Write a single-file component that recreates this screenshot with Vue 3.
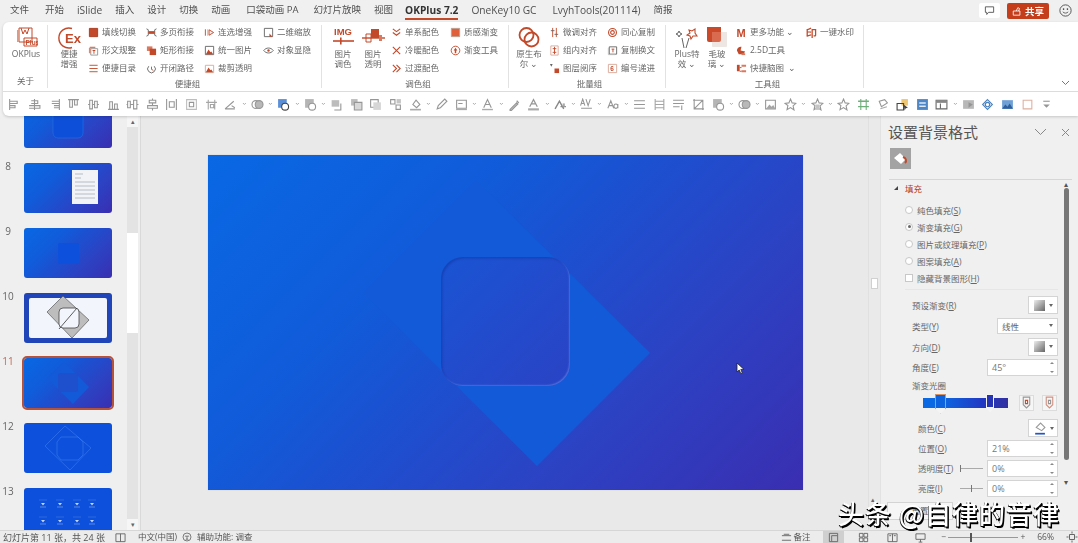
<script setup>
import { h } from 'vue'

const RED = '#c2492a', G = '#969696', D = '#666'
const s = (d, c = G, w = 1) => ['path', { d, fill: 'none', stroke: c, 'stroke-width': w }]
const f = (d, c = RED) => ['path', { d, fill: c }]
const t = (x, y, size, str, c = RED, weight = 700) => ['text', { x, y, 'font-size': size, fill: c, 'font-weight': weight, 'font-family': 'Liberation Sans, sans-serif' }, str]
const c = (cx, cy, r, col = RED, w = 1.5, fill = 'none') => ['circle', { cx, cy, r, stroke: col, 'stroke-width': w, fill }]

const I = {
  // ribbon small
  rFill: [f('M1.5 1.5h9v9h-9z'), s('M1.5 1.5h9v9h-9z', '#a8391d')],
  rText: [s('M2 2.5h6', RED), s('M3 4h7.5v7H3z', G), f('M5 5.5h3v1H7v3H6v-3H5z'), f('M1 3h2v6H1z', '#d98a75')],
  rToc: [s('M1.5 2.5h9M1.5 6h9M1.5 9.5h9', RED)],
  rPage: [s('M.5 2l2 1v6l-2 1M11.5 2l-2 1v6l2 1', D), f('M2.5 4.5h7v3h-7z')],
  rRect: [f('M1 1.5h6v5H1z', '#d97a60'), f('M4 4h7v7H4z')],
  rPath: [s('M3 3.5a4.2 4.2 0 1 0 6 0', D), s('M6 4v3l2 1', RED)],
  rSel: [s('M1.5 2.5v7', RED), s('M4 2.5v7', '#bbb'), f('M5.5 3l5 3-5 3z', '#eee'), s('M5.5 3l5 3-5 3z', RED)],
  rPic: [s('M1.5 1.5h9v9h-9z', D), f('M2 10l3-5 2 3 1-1 2 3z')],
  rCrop: [s('M1.5 2.5h9v8h-9z', '#d9a899'), f('M2 10l3-5 2 3 1-1 2 3z')],
  rZoom: [s('M1.5 1.5h9v9h-9z', D), f('M7 7l3.5 3.5H7z')],
  rEye: [s('M.8 6c2.5-3.6 7.9-3.6 10.4 0-2.5 3.6-7.9 3.6-10.4 0z', D), f('M4.7 6a1.3 1.3 0 1 0 2.6 0 1.3 1.3 0 0 0-2.6 0z')],
  rV1: [s('M2 2l4 3 4-3M2 6l4 3 4-3', RED, 1.2)],
  rV2: [s('M2 2l8 8M10 2L2 10', RED, 1.2)],
  rV3: [s('M2 2l4 4-4 4M6 2l4 4-4 4', RED, 1.2)],
  rTex: [f('M1.5 1.5h9v9h-9z', '#e0603c'), s('M1.5 1.5h9v9h-9z', '#b8a090')],
  rGrad: [c(6, 6, 4.7, RED, 1), f('M6 3l2 3H6.8v3H5.2V6H4z')],
  rAl1: [s('M4 1v10M8 1v10', RED), s('M2 4h4M6 8h4', D)],
  rAl2: [s('M2 1h8v10H2z', '#d9a899'), s('M6 2v8M4 4h4M4 8h4', RED)],
  rLay: [f('M1 1l3 0-1.5 3z', D), f('M6 6h5v5H6z')],
  rRing: [c(6, 6, 4.3, RED, 1.2), c(6, 6, 2, RED, 1.2)],
  rCopy: [s('M2.5 2h8v8h-8z', D), s('M1.5 3v7.5H9', '#bbb'), s('M5 4.5h3M6.5 4.5V8', RED)],
  rNum: [s('M1.5 1.5h9v9h-9z', '#d9a899'), t(3.6, 9, 7, '6')],
  rM: [t(.5, 10.5, 12, 'M')],
  r25: [f('M1 6c0-3 3-4.5 5-4l-1 4 5 1-2 3H3z'), f('M6 9h4v2H6z', '#d97a60')],
  rMind: [f('M1 2h3v7H1z'), f('M6 2h5v2H6zM6 8h5v2H6z', '#d97a60'), s('M4 5h2M4 9h2', RED)],
  rMark: [t(.5, 10.5, 12, '印', RED)],
  // ribbon big
  bOk: [s('M5 3h13v14H5z', RED), s('M7 3l2 6 2-4 2 4 2-6', RED), f('M3 5h2v12H3z', '#dd9a85'), s('M10 13h13v8H10z', RED), t(11.5, 19.5, 6.5, 'Plus')],
  bEx: [s('M15 3.5a10 10 0 1 0 0 19', RED, 1.4), t(8, 18, 13, 'Ex')],
  bImg: [t(3, 9.5, 9.5, 'IMG'), s('M2 16h21', RED, 1.6), f('M9 12.5h1.6v7H9z')],
  bTrans: [s('M1 13h23', RED, 1.4), f('M10 4h8v9h-8z'), s('M5 9h5v8H5z', RED), f('M18 10h3v6h-3z', '#d97a60')],
  bBool: [c(9.5, 10, 7, RED, 1.8), c(14.5, 14.5, 7, RED, 1.8)],
  bPlus: [s('M14 5l3 1 3-2 0 4 2 3-4 0-2 3-1-3-3-1 3-2z', RED, 1.1), s('M4 6l1 2 2 1-2 1-1 2-1-2-2-1 2-1z', D), s('M14 13l-3 10M7 13l2 10', D)],
  bGlass: [f('M2 2h14v13a2 2 0 0 1-2 2H4a2 2 0 0 1-2-2z', '#c9492a'), f('M7 7h15v14a1 1 0 0 1-1 1H8a1 1 0 0 1-1-1z', '#eee6e2'), f('M7 7h9v8a2 2 0 0 1-2 2H7z', '#d96c50')],
  // QAT
  al: [s('M1.500 1v10M1.500 3h7v2h-7M1.500 7h5v2h-5')],
  ac: [s('M6 1v10M3 2.500h6v2.500H3M1 7h10v2.500H1')],
  ar: [s('M10.500 1v10M3.500 3h7v2h-7M5.500 7h5v2h-5')],
  at: [s('M1 1.500h10M2.500 1.500v7h2.500v-7M7 1.500v5h2.500v-5')],
  am: [s('M1 6h1.500M5 6h2M9.500 6H11M2.500 2H5v8H2.500zM7 3h2.500v6H7z')],
  ab: [s('M1 10.500h10M2.500 10.500v-7H5v7M7 10.500v-5h2.500v5')],
  dh: [s('M.5 6h1M1.500 3h2.500v6H1.500zM4 6h3M7 2h3v8H7zM10 6h1.500')],
  dv: [s('M6 .5V2M3 2h6v2.500H3zM6 4.500V7M1.500 7h9v2.500h-9zM6 9.500v2')],
  wh: [s('M1.500 1v10M10.500 1v10M4 3.500h4.500v5H4z')],
  hh: [s('M3 1.500v9M9 1.500v9M1 4h10M5 6h3v3H5z', '#a5a5a5')],
  sz: [s('M1.500 1.500h9v9h-9z', '#bdbdbd'), s('M4 4h4v4H4z', G)],
  rot: [s('M1 10l8-7M1 10h9M7 7l3 2', G)],
  merge: [c(4.5, 6, 3.6, G, 1), c(7.5, 6, 3.6, G, 1, '#b8b8b8')],
  fillB: [f('M1 1h8v8H1z', '#5a8fd8'), c(7.5, 8, 3.2, '#444', 1, '#fff')],
  fillG: [f('M1 1h8v8H1z', '#b5b5b5'), c(7.5, 8, 3.2, G, 1, '#fff')],
  l1: [f('M1.5 2h7v6h-7z', '#bcbcbc'), s('M10 5v6H4', G)],
  l2: [f('M1 1h6v6H1z', '#bcbcbc'), f('M4 4h7v7H4z', '#d8d8d8'), s('M4 4h7v7H4z', G)],
  l3: [s('M1.5 1.5h7v7h-7z', G), f('M4 4h7v7H4z', '#d6d6d6')],
  l4: [s('M1.5 1.5h4v4h-4zM6.5 6.5h4v4h-4z', G), f('M7 1h4v4H7z', '#c5c5c5')],
  bucket: [s('M3.5 6l3-4 3.5 4-3 3z', G), f('M1 10h10v1.5H1z', '#aaa')],
  pen: [s('M2 10l1-3 6-6 2 2-6 6z', G)],
  card: [s('M1.5 2h9v7.5h-9zM3 5h4', G), f('M1 10h10v1.2H1z', '#aaa')],
  A: [s('M2.5 9L6 1.5 9.5 9M4 6h4', G), f('M1 10h10v1.3H1z', '#aaa')],
  dropper: [s('M2 10.5l6-6 1 1-6 6H2zM8 2.5l2 2', G, 1.2)],
  Ag: [s('M2.5 8L6 1.5 9.5 8M4 5.5h4', G, 1.1), f('M1 9.5h10v2H1z', '#aaa')],
  dk: [s('M1 10L5 3l4 7M6 8h5', '#888', 1.3), f('M8 5h2v3H8z', '#aaa')],
  av: [s('M.5 7L2.5 1l2 6M1 5h3M5.5 1l2 6 2-6M1 9.500h10', G)],
  Aa: [s('M.8 9.5L3.5 2.5l2.7 7M1.8 7h3.400M10 5.500v4M10 7.500a1.800 2 0 1 0 0 .1', G)],
  lines: [s('M1 2.5h10M1 6h10M1 9.5h10', G)],
  lines2: [s('M2 1v10M10 1v10M2 3h8M2 6h8M2 9h8', '#a5a5a5')],
  lines3: [s('M1 2h10M1 5h10M1 8h6M9 7v4', G)],
  crop: [s('M2 1v9h9M1 2h9v9M2 10l8-8', G)],
  pic: [s('M1.5 2h9v8h-9z', G), f('M2 10l3-4 2 2 1.5-1.5 2 3.5z', '#a5a5a5')],
  star: [s('M6 1l1.5 3.5 3.5.4-2.6 2.4.8 3.7L6 8.8l-3.2 1.9.8-3.7L1 4.9l3.5-.4z', G)],
  star2: [s('M6 1l1.5 3.5 3.5.4-2.6 2.4.8 3.7L6 8.8l-3.2 1.9.8-3.7L1 4.9l3.5-.4z', G), f('M4 6h4v5H4z', '#c4c4c4')],
  green: [s('M1 3h10M1 8h10', '#6fae7a', 1.2), s('M3.5 1v10M8.5 1v10', '#6fae7a')],
  tilt: [s('M3 3l5-1.5 2.5 3L5 8z', G), s('M4 10l6-2', '#aaa')],
  sel: [f('M5 1h6v6H5z', '#edc676'), s('M1 5h6v6H1z', '#444'), f('M7 6l4 3-2 .5-1 2z', '#444')],
  blue: [f('M1 1h10v10H1z', '#4f86c6'), f('M3 4h6v1.2H3zM3 7h6v1.2H3z', '#dfeaf6')],
  win: [s('M1 2h10v8H1z', '#666'), f('M1 2h10v2.5H1z', '#888'), s('M5 5v5', '#666')],
  gfx: [f('M1 2h10v8H1z', '#b8b8b8'), f('M6 4l4 2-4 3z', '#959595')],
  diam: [s('M6 1.5L10.5 6 6 10.5 1.5 6zM3.5 6h5', '#4a82bf'), c(6, 6, 2, '#4a82bf', 1, '#fff')],
  land: [f('M1 2h10v8H1z', '#6fa1d6'), f('M1 10l3-4 2 2 2-3 3 5z', '#2f5f9c')],
  oBox: [s('M2 2h8v8H2z', '#e0b0a0')],
  more: [s('M3 3h6', G), f('M3 6h6L6 9z', G)],
  // pane / status
  reset1: [s('M3 1h6v7L6 11 3 8z', G), s('M5 4h2v3H5z', RED)],
  reset2: [s('M3 1h6v7L6 11 3 8z', '#d09080'), s('M5 4h2v3H5z', G)],
  paint: [f('M3 5l4-4 4 4-3 3z', '#fff'), s('M3 5l4-4 4 4-3 3z', '#999'), f('M2 10h9v1.6H2z', '#2255c8')],
  note: [s('M1 4h10M3 2.5h6M1 9h10', D)],
  vNormal: [s('M1.5 1.5h9v9h-9zM4 4v6', D), s('M4 4h6', D)],
  vSort: [s('M1.5 1.5h4v4h-4zM6.5 1.5h4v4h-4zM1.5 6.5h4v4h-4zM6.5 6.5h4v4h-4z', D)],
  vRead: [s('M1 2h10v8.5H1zM6 2v8.5M2.5 4h2M7.5 4h2', D)],
  vShow: [s('M1 2h10v6H1zM6 8v3M4 11h4', D)],
  fit: [s('M6 .5v2M6 9.5v2M.5 6h2M9.5 6h2M3.5 3.5h5v5h-5z', D)],
  book: [s('M1 2h10v8.5H1zM6 2v8.5', D)],
  access: [c(6, 6, 4.8, D, 1), s('M3.5 5h5M6 5v2.5M4.5 10L6 7.5 7.5 10', D)],
  comment: [s('M1.5 2h9v6H5L3 10.3V8H1.5z', '#555')],
  shareI: [s('M1.5 6h8v5h-8zM5 6l2-4 2 1-1 3', '#fff')],
  smile: [c(6, 6, 5.2, '#555', .9), s('M3.5 7.2c1 1.6 4 1.6 5 0', '#555', .8), f('M3.6 4h1.2v1.6H3.6zM7.2 4h1.2v1.6H7.2z', '#555')]
}

const Ic = (props) => {
  const vb = props.vb || 12
  return h('svg', { viewBox: `0 0 ${vb} ${vb}`, width: props.size || 12, height: props.size || 12, style: 'display:block;flex:none' },
    (I[props.n] || []).map(([tag, attrs, txt]) => h(tag, attrs, txt)))
}
Ic.props = ['n', 'size', 'vb']

const tabs = ['文件', '开始', 'iSlide', '插入', '设计', '切换', '动画', '口袋动画 PA', '幻灯片放映', '视图', 'OKPlus 7.2', 'OneKey10 GC', 'LvyhTools(201114)', '简报']
const isLatin = (x) => /^[A-Za-z]/.test(x)

const groups = [
  { id: 'g1', label: '关于', items: [{ big: ['OKPlus'], n: 'bOk', cls: 'wide' }] },
  { id: 'g2', label: '便捷组', items: [
    { big: ['便捷', '增强'], n: 'bEx' },
    { col: [['rFill', '填线切换'], ['rText', '形文规整'], ['rToc', '便捷目录']], w: 'w58' },
    { col: [['rPage', '多页衔接'], ['rRect', '矩形衔接'], ['rPath', '开闭路径']], w: 'w58' },
    { col: [['rSel', '连选增强'], ['rPic', '统一图片'], ['rCrop', '裁剪透明']], w: 'w59' },
    { col: [['rZoom', '二维缩放'], ['rEye', '对象显隐']], w: 'w58' }
  ] },
  { id: 'g3', label: '调色组', items: [
    { big: ['图片', '调色'], n: 'bImg' },
    { big: ['图片', '透明'], n: 'bTrans' },
    { col: [['rV1', '单系配色'], ['rV2', '冷暖配色'], ['rV3', '过渡配色']], w: 'w59' },
    { col: [['rTex', '质感渐变'], ['rGrad', '渐变工具']], w: 'w58' }
  ] },
  { id: 'g4', label: '批量组', items: [
    { big: ['原生布', '尔 ⌄'], n: 'bBool' },
    { col: [['rAl1', '微调对齐'], ['rAl2', '组内对齐'], ['rLay', '图层阅序']], w: 'w58' },
    { col: [['rRing', '同心复制'], ['rCopy', '复制换文'], ['rNum', '编号递进']], w: 'w58' }
  ] },
  { id: 'g5', label: '工具组', items: [
    { big: ['Plus特', '效 ⌄'], n: 'bPlus' },
    { big: ['毛玻', '璃 ⌄'], n: 'bGlass' },
    { col: [['rM', '更多功能 ⌄'], ['r25', '2.5D工具'], ['rMind', '快捷脑图  ⌄']], w: 'w70' },
    { col: [['rMark', '一键水印']], w: 'w58' }
  ] }
]

const qat = ['al', 'ac', 'ar', 'at', 'am', 'ab', 'dh', 'dv', 'wh', 'sz', 'hh', 'rot*', 'merge*', 'fillB*', 'fillG*', 'l1', 'l2', 'l3', 'l4', 'bucket*', 'pen', 'card*', 'A*', 'dropper', 'Ag*', 'dk*', 'av*', 'Aa*', 'lines', 'lines2', 'lines3', 'crop', 'fillG*', 'merge*', 'pic', 'star*', 'star2*', 'star', 'green', 'tilt', 'sel', 'blue', 'win*', 'gfx', 'diam', 'land', 'oBox', 'more']
  .map((k) => ({ k: k.replace('*', ''), ch: k.endsWith('*') }))

const slides = [7, 8, 9, 10, 11, 12, 13]
const marks = [19, 36, 53, 68, 19, 36, 53, 68]

const radios = [
  { text: '纯色填充', key: 'S' }, { text: '渐变填充', key: 'G', on: true },
  { text: '图片或纹理填充', key: 'P' }, { text: '图案填充', key: 'A' }
]
</script>

<template>
  <div class="app">
    <header class="topbar">
      <nav class="tabs">
        <span v-for="tb in tabs" :key="tb" class="tab" :class="{ active: tb.startsWith('OKPlus'), latin: isLatin(tb) }">{{ tb }}</span>
      </nav>
      <div class="top-right">
        <button class="cmt"><Ic n="comment" :size="11" /></button>
        <button class="share"><Ic n="shareI" :size="10" /><b>共享</b></button>
        <span class="smile"><Ic n="smile" :size="13" /></span>
      </div>
    </header>

    <section class="ribbon">
      <div class="groups">
        <div v-for="g in groups" :key="g.id" class="group" :class="g.id">
          <div class="group-body">
            <template v-for="(it, i) in g.items" :key="i">
              <div v-if="it.big" class="big" :class="it.cls">
                <span class="big-ic"><Ic :n="it.n" :size="24" :vb="24" /></span>
                <span v-for="l in it.big" :key="l" class="big-t">{{ l }}</span>
              </div>
              <div v-else class="col" :class="it.w">
                <div v-for="r in it.col" :key="r[1]" class="item"><Ic :n="r[0]" :size="11" /><span>{{ r[1] }}</span></div>
              </div>
            </template>
          </div>
          <div class="glabel">{{ g.label }}</div>
        </div>
        <div class="collapse"><svg width="9" height="6" viewBox="0 0 9 6"><path d="M1 1l3.5 3.5L8 1" fill="none" stroke="#777" /></svg></div>
      </div>
      <div class="qat">
        <template v-for="(q, i) in qat" :key="i">
          <span class="q"><Ic :n="q.k" :size="13" /></span>
          <svg v-if="q.ch" class="qch" width="7" height="4" viewBox="0 0 7 4"><path d="M2 1l1.500 1.500L5 1" fill="none" stroke="#aaa" /></svg>
        </template>
      </div>
    </section>

    <main class="main">
      <aside class="thumbs">
        <div class="list">
          <div v-for="n in slides" :key="n" class="row" :class="{ cur: n === 11 }">
            <span class="num">{{ n === 7 ? '' : n }}</span>
            <div class="thumb" :class="'t' + n">
              <svg viewBox="0 0 88 50" width="88" height="50">
                <rect v-if="n === 7" x="29" y="10" width="30" height="30" rx="5" fill="#0d4fd8" stroke="#2f78e8" stroke-width=".5" />
                <template v-if="n === 8">
                  <rect x="48" y="7" width="26" height="34" fill="#f1f3f6" />
                  <path d="M51 11h8M51 15h6M51 19h20M51 23h20M51 27h20M51 31h20M51 35h20" stroke="#8f98a8" stroke-width=".6" />
                </template>
                <rect v-if="n === 9" x="34" y="15" width="21" height="21" rx="2" fill="#0c50dc" />
                <template v-if="n === 10">
                  <rect x="5" y="5" width="78" height="40" rx="2" fill="#f2f6fc" />
                  <path d="M39 3L65 27 48 45 23 19z" fill="#bdbdbd" stroke="#444" stroke-width=".6" />
                  <rect x="35" y="15" width="20" height="20" rx="4" fill="#f2f6fc" stroke="#444" stroke-width=".8" />
                  <path d="M35 36L53 15" stroke="#333" stroke-width=".8" />
                </template>
                <template v-if="n === 11">
                  <path d="M40 4L65 29 49 46 23 20z" fill="#125ad7" />
                  <rect x="34" y="15" width="20" height="19" rx="3" fill="#1e4fcd" />
                </template>
                <template v-if="n === 12">
                  <path d="M41 3L67 25 46 47 21 23z" fill="none" stroke="#3d7cf0" stroke-width=".6" />
                  <path d="M37 14h17l5 5v13l-5 5H37l-4-5V19z" fill="none" stroke="#3d7cf0" stroke-width=".6" />
                </template>
                <template v-if="n === 13">
                  <g v-for="(x, i) in marks" :key="i">
                    <path :d="`M${x - 2} ${i < 4 ? 15 : 32}h4l-2 2.500z`" fill="#c4d6f6" />
                    <path :d="`M${x - 4} ${i < 4 ? 12 : 29}h8`" stroke="#4d80e8" stroke-width=".5" />
                    <path :d="`M${x - 3} ${i < 4 ? 19 : 36}h6`" stroke="#8fb0f0" stroke-width=".6" />
                  </g>
                </template>
              </svg>
            </div>
          </div>
        </div>
        <div class="vbar">
          <span class="arr">▴</span>
          <div class="vtrack"><div class="vthumb"></div></div>
          <span class="arr">▾</span>
        </div>
      </aside>

      <div class="canvas">
        <div class="slide">
          <svg class="diamond" viewBox="0 0 595 335" width="595" height="335">
            <path d="M268 25L442 198 329 311 155 138z" fill="#125ad7" />
          </svg>
          <div class="rrect"></div>
        </div>
        <svg class="cursor" width="9" height="13" viewBox="0 0 9 13"><path d="M1 1v9l2.200-2 1.600 3.600 1.500-.7L4.800 7.400H8z" fill="#fff" stroke="#222" stroke-width=".8" /></svg>
        <div class="cbar">
          <div class="cthumb"></div>
          <span class="cup">▴</span>
        </div>
      </div>

      <aside class="pane">
        <div class="p-head">
          <span class="p-title">设置背景格式</span>
          <span class="p-btns">
            <svg width="13" height="8" viewBox="0 0 13 8"><path d="M1 1l5.500 5.500L12 1" fill="none" stroke="#888" /></svg>
            <svg width="9" height="9" viewBox="0 0 9 9"><path d="M1 1l7 7M8 1L1 8" stroke="#888" /></svg>
          </span>
        </div>
        <div class="p-tab">
          <svg width="15" height="15" viewBox="0 0 15 15"><path d="M1 7l6-5 6 6-5 5z" fill="#fff" /><path d="M10 6c3 1 4 4 2 6" fill="none" stroke="#c2492a" stroke-width="2" /></svg>
        </div>
        <div class="p-line"></div>
        <div class="p-body">
          <div class="form">
            <div class="sect"><i class="tri"></i><span>填充</span></div>
            <div class="opts">
              <label v-for="r in radios" :key="r.key" class="opt">
                <i class="radio" :class="{ on: r.on }"></i>
                <span>{{ r.text }}(<u>{{ r.key }}</u>)</span>
              </label>
              <label class="opt"><i class="check"></i><span>隐藏背景图形(<u>H</u>)</span></label>
            </div>
            <div class="sep"></div>
            <div class="fr"><span>预设渐变(<u>R</u>)</span><div class="btn"><i class="gsw"></i><i class="dd"></i></div></div>
            <div class="fr"><span>类型(<u>Y</u>)</span><div class="sel"><span>线性</span><i class="dd"></i></div></div>
            <div class="fr"><span>方向(<u>D</u>)</span><div class="btn"><i class="gsw"></i><i class="dd"></i></div></div>
            <div class="fr"><span>角度(<u>E</u>)</span><div class="inp"><span>45°</span><em class="spin"></em></div></div>
            <div class="fr low"><span>渐变光圈</span></div>
            <div class="stops">
              <div class="gbar">
                <i class="stop s1"></i><i class="stop s2"></i>
              </div>
              <span class="sbtn"><Ic n="reset1" :size="13" /></span>
              <span class="sbtn"><Ic n="reset2" :size="13" /></span>
            </div>
            <div class="fr in"><span>颜色(<u>C</u>)</span><div class="btn"><Ic n="paint" :size="13" /><i class="dd"></i></div></div>
            <div class="fr in"><span>位置(<u>O</u>)</span><div class="inp"><span>21%</span><em class="spin"></em></div></div>
            <div class="fr in"><span>透明度(<u>T</u>)</span><i class="slid sl"></i><div class="inp"><span>0%</span><em class="spin"></em></div></div>
            <div class="fr in"><span>亮度(<u>I</u>)</span><i class="slid sm"></i><div class="inp"><span>0%</span><em class="spin"></em></div></div>
            <div class="reset">重置</div>
          </div>
          <div class="pbar">
            <span class="parr">▴</span>
            <div class="pthumb"></div>
            <span class="parr">▾</span>
          </div>
        </div>
      </aside>
    </main>

    <footer class="status">
      <div class="st-left">
        <span class="st-a">幻灯片第 11 张，共 24 张</span>
        <Ic n="book" :size="11" />
        <span>中文(中国)</span>
        <Ic n="access" :size="10" />
        <span>辅助功能: 调查</span>
      </div>
      <div class="st-right">
        <span class="st-note"><Ic n="note" :size="11" />备注</span>
        <span class="vw on"><Ic n="vNormal" :size="11" /></span>
        <span class="vw"><Ic n="vSort" :size="11" /></span>
        <span class="vw"><Ic n="vRead" :size="11" /></span>
        <span class="vw"><Ic n="vShow" :size="11" /></span>
        <div class="zoomer"><span>−</span><div class="ztrack"><i></i></div><span>+</span></div>
        <span class="pct">66%</span>
        <Ic n="fit" :size="12" />
      </div>
    </footer>

    <div class="watermark">头条 @自律的音律</div>
  </div>
</template>

<style>
html, body { margin: 0; padding: 0; background: #f0f0f0; overflow: hidden; }
</style>

<style scoped>
.app { position: relative; width: 1078px; height: 543px; overflow: hidden; background: #f0f0f0; display: flex; flex-direction: column; font-family: "Open Sans", "Noto Sans CJK SC", sans-serif; font-size: 8.5px; color: #666; }
.app > *:not(.watermark) { filter: blur(.3px); }
button { border: 0; padding: 0; font: inherit; }

.topbar { height: 22px; flex: none; display: flex; justify-content: space-between; }
.tabs { display: flex; align-items: flex-start; gap: 13px; padding-left: 10px; font-size: 9.500px; line-height: 20px; color: #4f4f4f; }
.tab { white-space: pre; }
.tab.latin { font-size: 10.200px; }
.tab:nth-child(1), .tab:nth-child(7), .tab:nth-child(12) { margin-right: 3px; }
.tab:nth-child(8) { margin-right: 2px; }
.tab.active { font-weight: 700; color: #333; border-bottom: 2px solid #c2492a; height: 18px; margin-left: -1px; }
.top-right { display: flex; align-items: center; gap: 7px; padding-right: 3px; height: 21px; }
.cmt { width: 21px; height: 15px; background: #fff; border-radius: 2px; display: flex; align-items: center; justify-content: center; }
.share { width: 42px; height: 16px; background: #c43e1c; border-radius: 2px; color: #fff; display: flex; align-items: center; justify-content: center; gap: 3px; font-size: 9.500px; }
.smile { margin-left: -1px; width: 20px; display: flex; justify-content: center; }

.ribbon { flex: none; margin-left: 3px; height: 94px; background: #fff; border-radius: 6px 0 0 6px; box-shadow: 0 1px 3px rgba(0,0,0,.18); position: relative; z-index: 2; }
.groups { height: 69px; display: flex; border-bottom: 1px solid #dcdcdc; position: relative; }
.group { height: 63px; border-right: 1px solid #e2e2e2; display: flex; flex-direction: column; flex: none; box-sizing: border-box; margin-top: 3px; }
.g1 { width: 45px; padding-left: 1px; }
.g2 { width: 274px; padding-left: 6px; }
.g3 { width: 187px; padding-left: 6px; }
.g4 { width: 157px; padding-left: 5px; }
.g5 { width: 198px; padding-left: 6px; }
.group-body { flex: 1; display: flex; align-items: flex-start; margin-top: -3px; }
.glabel { height: 14px; line-height: 13px; text-align: center; font-size: 8.5px; color: #666; }
.big { width: 30px; flex: none; display: flex; flex-direction: column; align-items: center; font-size: 8.5px; line-height: 10px; color: #666; }
.big.wide { width: 44px; }
.big-ic { height: 27px; display: flex; align-items: flex-end; }
.big-t { white-space: pre; }
.g2 .big { margin-right: 4px; }
.g3 .big:nth-child(2) { margin-right: 3px; }
.g4 .big { margin-right: 5px; }
.g5 .big:nth-child(2) { margin-right: 4px; }
.col { flex: none; display: flex; flex-direction: column; padding-top: 1px; }
.w58 { width: 58px; }
.w59 { width: 59px; }
.w70 { width: 70px; }
.item { height: 18px; display: flex; align-items: center; gap: 3px; white-space: pre; line-height: 1; }
.collapse { position: absolute; right: 8px; bottom: 5px; line-height: 0; }

.qat { height: 24px; display: flex; align-items: center; padding-left: 2px; }
.q { width: 19.650px; display: flex; justify-content: center; flex: none; }
.qch { flex: none; width: 6.800px; }

.main { flex: 1; min-height: 0; display: flex; }
.thumbs { width: 141px; flex: none; display: flex; background: #efefef; border-right: 1px solid #d9d9d9; box-sizing: border-box; overflow: hidden; }
.list { width: 127px; flex: none; margin-top: -18px; display: flex; flex-direction: column; gap: 15px; }
.row { height: 50px; display: flex; flex: none; position: relative; }
.num { width: 24px; box-sizing: border-box; font-size: 10px; line-height: 10px; color: #666; text-align: center; padding: 0 8px 0 0; margin-top: -2px; }
.row.cur .num { color: #c2694f; }
.thumb { width: 88px; height: 50px; border-radius: 3px; overflow: hidden; background: linear-gradient(135deg, #0968e4 0%, #115bd9 33%, #1d4fcf 50%, #2b43c4 70%, #3a2eb1 100%); }
.row.cur .thumb { outline: 2px solid #b5523c; outline-offset: 0; }
.t10 { background: #1f45b8; }
.t12, .t13 { background: #0c50dc; }
.thumb svg { display: block; }
.vbar { width: 11px; flex: none; background: #e3e3e3; display: flex; flex-direction: column; align-items: center; height: 414px; }
.arr { height: 11px; width: 11px; background: #f6f6f6; color: #666; font-size: 7px; line-height: 11px; text-align: center; flex: none; }
.vtrack { flex: 1; width: 100%; padding-top: 106px; box-sizing: border-box; }
.vthumb { height: 100px; background: #fff; }

.canvas { flex: 1; position: relative; background: #e9e9e9; padding: 39px 0 0 67px; box-sizing: border-box; min-width: 0; }
.slide { position: relative; width: 595px; height: 335px; background: linear-gradient(135deg, #0968e4 0%, #115bd9 33%, #1d4fcf 50%, #2b43c4 70%, #3a2eb1 100%); overflow: hidden; box-shadow: 0 0 1px rgba(0,0,0,.2); }
.diamond { position: absolute; left: 0; top: 0; }
.rrect { position: absolute; left: 233px; top: 102px; width: 129px; height: 129px; border-radius: 22px; background: linear-gradient(135deg, #1a54d3, #2a43c5); box-shadow: inset 1.500px 1.500px 2px rgba(12,44,150,.4), inset -1px -1px 1.500px rgba(120,150,245,.5); }
.cursor { position: absolute; left: 595px; top: 246px; }
.cbar { position: absolute; right: 0; top: 0; bottom: 0; width: 12px; background: #eaeaea; border-left: 1px solid #e0e0e0; box-sizing: border-box; }
.cthumb { position: absolute; left: 2px; top: 162px; width: 7px; height: 11px; background: #fff; border: 1px solid #d0d0d0; box-sizing: border-box; }
.cup { position: absolute; left: 2px; bottom: 26px; font-size: 7px; color: #666; line-height: 8px; }

.pane { width: 198px; flex: none; background: #f0f0f0; box-sizing: border-box; padding: 4px 0 0 7px; border-left: 1px solid #e2e2e2; }
.p-head { height: 24px; display: flex; align-items: center; justify-content: space-between; padding-right: 8px; }
.p-title { font-size: 15px; color: #555; line-height: 24px; }
.p-btns { display: flex; align-items: center; gap: 14px; }
.p-tab { width: 21px; height: 21px; margin: 4px 0 0 2px; background: #a3a3a3; display: flex; align-items: center; justify-content: center; }
.p-line { height: 1px; margin: 10px 6px 0 1px; background: #d6d6d6; }
.p-body { display: flex; }
.form { width: 171px; flex: none; box-sizing: border-box; padding-left: 24px; padding-right: 1px; font-size: 8.5px; color: #666; }
.sect { height: 16px; display: flex; align-items: center; margin-left: -18px; color: #b53a20; gap: 7px; }
.tri { width: 0; height: 0; border-left: 4px solid transparent; border-bottom: 4px solid #444; }
.opts { margin: 5px 0 0 -7px; }
.opt { height: 17px; display: flex; align-items: center; gap: 4px; }
.radio { width: 8px; height: 8px; border-radius: 50%; background: #fff; border: 1px solid #c8c8c8; box-sizing: border-box; flex: none; position: relative; }
.radio.on::after { content: ""; position: absolute; left: 1.500px; top: 1.500px; width: 3px; height: 3px; border-radius: 50%; background: #666; }
.check { width: 8px; height: 8px; background: #fff; border: 1px solid #c8c8c8; box-sizing: border-box; flex: none; }
.sep { height: 1px; background: #e6e6e6; margin: 3px 0 5px -7px; }
.fr { height: 20px; margin-bottom: .75px; display: flex; align-items: center; justify-content: space-between; position: relative; }
.fr.low { height: 14px; margin-bottom: 0; }
.fr.in { padding-left: 6px; margin-bottom: 0; height: 20px; }
.btn { width: 30px; height: 18px; background: #fff; border: 1px solid #d4d4d4; box-sizing: border-box; display: flex; align-items: center; justify-content: center; gap: 4px; }
.sel { width: 61px; height: 16px; background: #fff; border: 1px solid #d4d4d4; box-sizing: border-box; display: flex; align-items: center; justify-content: space-between; padding: 0 4px; }
.inp { width: 71px; height: 17px; background: #fff; border: 1px solid #d4d4d4; box-sizing: border-box; display: flex; align-items: center; justify-content: space-between; padding: 0 3px 0 4px; font-size: 9px; color: #777; }
.spin { width: 4px; height: 9px; position: relative; }
.spin::before, .spin::after { content: ""; position: absolute; left: 0; border: 2px solid transparent; }
.spin::before { top: -1px; border-bottom: 2px solid #888; border-top: 0; }
.spin::after { bottom: -1px; border-top: 2px solid #888; border-bottom: 0; }
.dd { width: 0; height: 0; border: 2.500px solid transparent; border-top: 3px solid #666; border-bottom: 0; }
.gsw { width: 11px; height: 11px; background: linear-gradient(135deg, #eee, #666); }
.stops { height: 21px; margin-bottom: 5px; display: flex; align-items: center; padding-left: 11px; }
.gbar { width: 85px; height: 10px; background: linear-gradient(90deg, #0b6ae3 0%, #0b6ae3 20%, #2038c4 70%, #33309f 100%); position: relative; margin-right: 11px; flex: none; }
.stop { position: absolute; box-sizing: border-box; clip-path: polygon(0 0,100% 0,100% 75%,50% 100%,0 75%); }
.s1 { left: 12px; top: -4px; width: 11px; height: 20px; background: linear-gradient(#0d62dd 70%, #f4f4f4 70%); box-shadow: inset 0 0 0 1px #d89160; }
.s2 { left: 63px; top: -4px; width: 8px; height: 19px; background: linear-gradient(#2634b4 70%, #f4f4f4 70%); box-shadow: inset 0 0 0 1px #f4f4f4; }
.sbtn { width: 15px; height: 16px; margin-right: 8px; background: #f6f6f6; border: 1px solid #dcdcdc; box-sizing: border-box; display: flex; align-items: center; justify-content: center; flex: none; }
.slid { position: absolute; height: 1px; background: #aaa; top: 10px; }
.slid::after { content: ""; position: absolute; top: -3px; width: 1px; height: 7px; background: #777; }
.sl { left: 48px; width: 23px; }
.sl::after { left: 0; }
.sm { left: 48px; width: 23px; }
.sm::after { left: 11px; }
.reset { margin: 4px 0 0 -25px; width: 66px; height: 18px; background: #f6f6f6; border: 1px solid #d4d4d4; box-sizing: border-box; text-align: center; line-height: 16px; }
.pbar { width: 8px; margin-left: 3px; display: flex; flex-direction: column; align-items: center; height: 318px; }
.parr { font-size: 8px; line-height: 8px; color: #555; flex: none; height: 8px; }
.pthumb { width: 5px; height: 272px; background: #777; border-radius: 3px; margin-bottom: 18px; }

.status { height: 13px; flex: none; background: #ececec; border-top: 1px solid #d6d6d6; box-sizing: border-box; display: flex; justify-content: space-between; align-items: center; font-size: 8.5px; color: #555; line-height: 1; white-space: pre; }
.st-left { display: flex; align-items: center; padding-left: 3px; gap: 5px; }
.st-a { width: 107px; font-size: 9px; }
.st-left svg:first-of-type { margin-right: 7px; }
.st-right { display: flex; align-items: center; height: 100%; }
.st-note { display: flex; align-items: center; gap: 2px; width: 42px; }
.vw { width: 28.500px; height: 100%; display: flex; align-items: center; justify-content: center; }
.vw.on { background: #cfcfcf; width: 21px; margin-right: 6px; }
.zoomer { display: flex; align-items: center; gap: 2px; margin-left: 6.500px; }
.ztrack { width: 70px; height: 1px; background: #999; position: relative; }
.ztrack i { position: absolute; left: 22px; top: -4px; width: 2px; height: 9px; background: #555; }
.pct { margin: 0 12px 0 12px; }

.watermark { position: absolute; left: 838px; top: 497px; font: 500 26px/32px "Noto Sans CJK SC", sans-serif; color: #fff; white-space: pre; text-shadow: 1px 1px 0 #000, 1.500px 1.500px 0 #000, -.5px .5px 0 #000; letter-spacing: 1px; }
</style>
